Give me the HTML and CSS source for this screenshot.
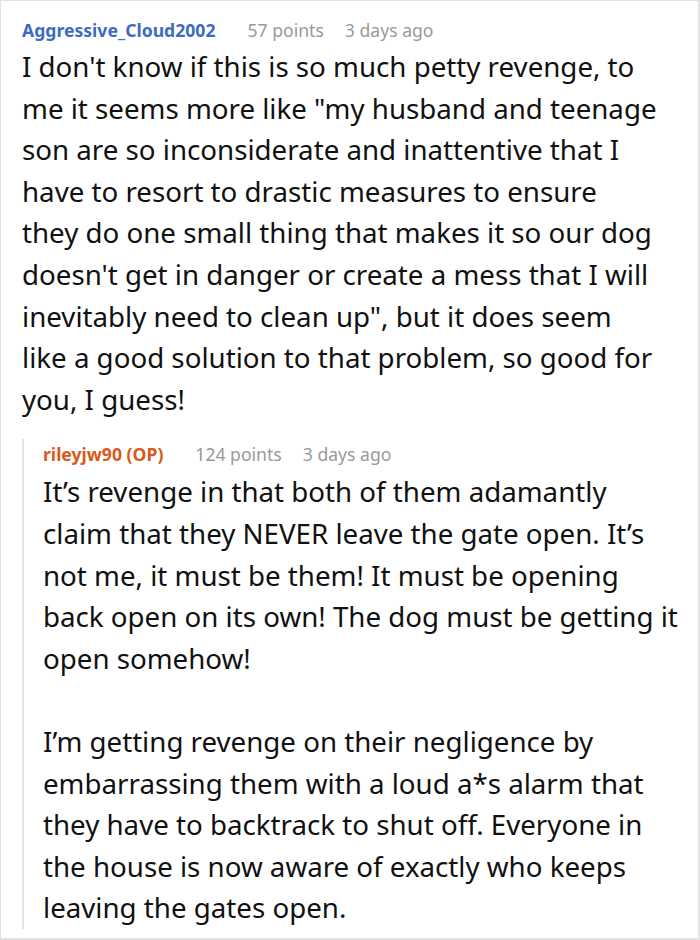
FILE: index.html
```html
<!DOCTYPE html>
<html>
<head>
<meta charset="utf-8">
<link rel="stylesheet" href="styles.css">
</head>
<body>
<div class="frame">
  <div class="comment">
    <div class="meta">
      <span class="author">Aggressive_Cloud2002</span>
      <span class="info">57 points</span>
      <span class="info">3 days ago</span>
    </div>
    <p class="text main-text">I don't know if this is so much petty revenge, to<br>me it seems more like "my husband and teenage<br>son are so inconsiderate and inattentive that I<br>have to resort to drastic measures to ensure<br>they do one small thing that makes it so our dog<br>doesn't get in danger or create a mess that I will<br>inevitably need to clean up", but it does seem<br>like a good solution to that problem, so good for<br>you, I guess!</p>
    <div class="reply">
      <div class="meta">
        <span class="author op">rileyjw90 (OP)</span>
        <span class="info">124 points</span>
        <span class="info">3 days ago</span>
      </div>
      <p class="text">It’s revenge in that both of them adamantly claim that they NEVER leave the gate open. It’s not me, it must be them! It must be opening back open on its own! The dog must be getting it open somehow!</p>
      <p class="text">I’m getting revenge on their negligence by embarrassing them with a loud a*s alarm that they have to backtrack to shut off. Everyone in the house is now aware of exactly who keeps leaving the gates open.</p>
    </div>
  </div>
</div>
</body>
</html>
```
FILE: styles.css
```css
html, body {
  margin: 0;
  padding: 0;
  background: #ffffff;
}
.frame {
  width: 700px;
  height: 940px;
  box-sizing: border-box;
  border: 2px solid #e2e2e2;
  border-left-width: 1px;
  border-top-width: 1px;
  overflow: hidden;
  font-family: "Noto Sans", "Open Sans", sans-serif;
}
.comment {
  padding: 14px 17px 0 21px;
}
.meta {
  display: flex;
  gap: 21px;
  font-size: 17.6px;
  line-height: 30px;
  color: #999999;
  margin-bottom: 1px;
}
.author {
  font-weight: bold;
  color: #3b6cbf;
  margin-right: 11px;
}
.author.op {
  color: #d85a1c;
}
.text {
  margin: 0;
  font-size: 27.7px;
  line-height: 41.6px;
  color: #111111;
}
.main-text {
  white-space: nowrap;
}
.reply {
  margin-top: 19px;
  border-left: 2px solid #e4e4e4;
  padding-left: 19px;
}
.reply .meta {
  margin-bottom: 2px;
}
.reply .text + .text {
  margin-top: 41.6px;
}
```
